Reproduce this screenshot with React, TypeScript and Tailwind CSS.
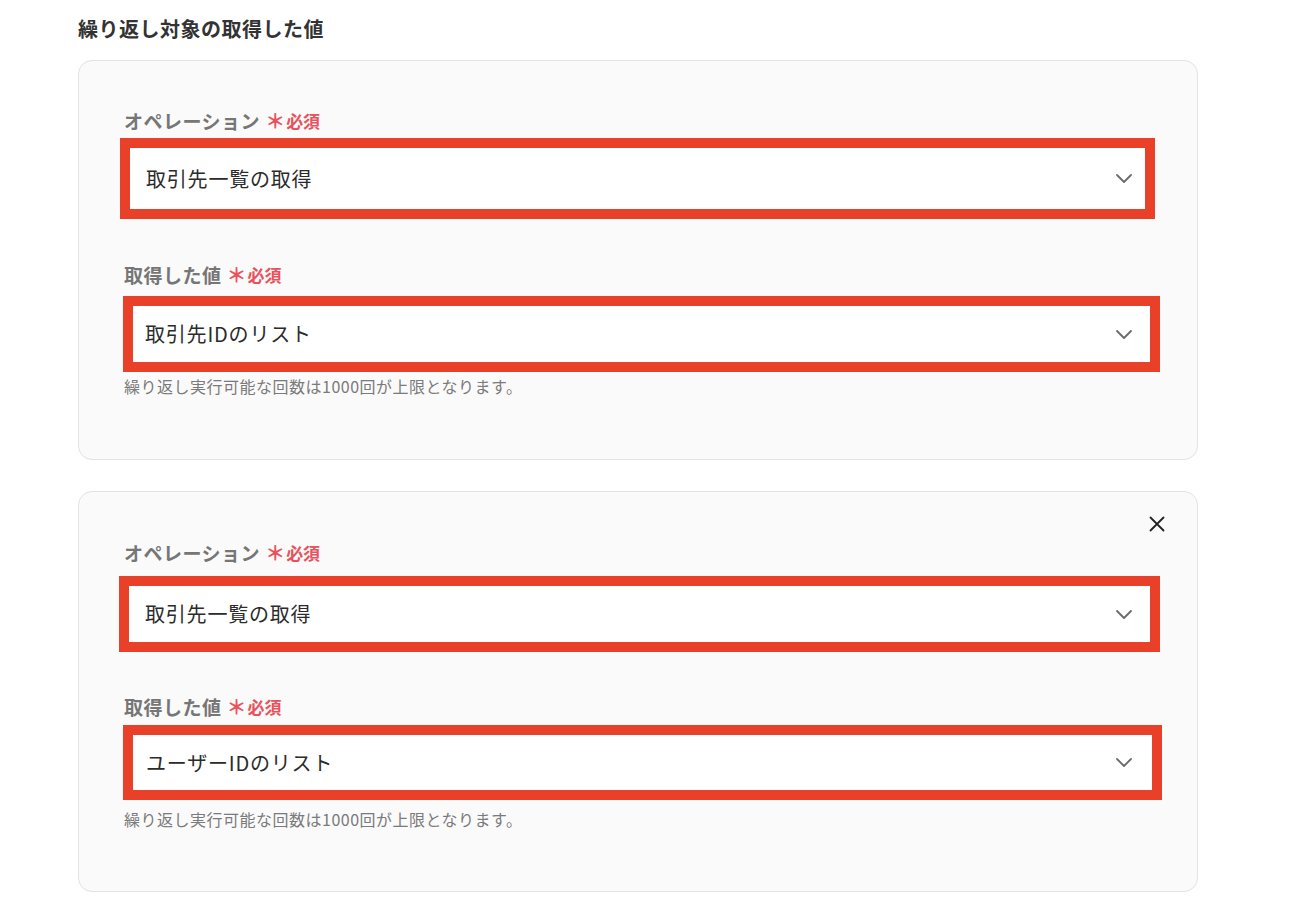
import React from "react";

const FONT = '"Noto Sans CJK JP", "Noto Sans", sans-serif';

function Chevron() {
  return (
    <svg width="16" height="9" viewBox="0 0 16 9" fill="none">
      <path d="M1 1 L8 8 L15 1" stroke="#6b6b6b" strokeWidth="1.8" strokeLinecap="round" strokeLinejoin="round" />
    </svg>
  );
}

function Label({ text }: { text: string }) {
  return (
    <div className="flex h-6 items-center">
      <span className="text-[19px] font-semibold leading-6 tracking-[0.5px] text-[#767676]">{text}</span>
      <span className="ml-[5px] text-[20px] font-semibold leading-6 text-[#e9515d]">＊</span>
      <span className="ml-[1px] text-[17px] font-semibold leading-6 text-[#e9515d]">必須</span>
    </div>
  );
}

function Select({ text, boxClass, innerClass }: { text: string; boxClass: string; innerClass: string }) {
  return (
    <div className={"box-border border-[10px] border-[#e94129] bg-white " + boxClass}>
      <div className={"flex h-full items-center justify-between " + innerClass}>
        <span className="text-[20px] leading-6 tracking-[0.8px] text-[#2b2b2b]">{text}</span>
        <Chevron />
      </div>
    </div>
  );
}

function Helper() {
  return (
    <div className="h-5 text-[16px] leading-5 tracking-[0.5px] text-[#7a7a7a]">
      繰り返し実行可能な回数は1000回が上限となります。
    </div>
  );
}

export default function App() {
  return (
    <div className="min-h-[901px] w-[1297px] bg-white" style={{ fontFamily: FONT }}>
      <div className="pl-[78px] pt-[15px]">
        <h2 className="h-7 text-[20px] font-semibold leading-7 tracking-[0.5px] text-[#333333]">
          繰り返し対象の取得した値
        </h2>

        <div className="mt-[17px] w-[1120px] rounded-[14px] border border-[#e3e3e3] bg-[#fafafa] pb-[63px] pl-[45px] pt-[48px]">
          <Label text="オペレーション" />
          <Select
            text="取引先一覧の取得"
            boxClass="mt-[5px] -ml-[4px] h-[81px] w-[1035px]"
            innerClass="pl-[16px] pr-[13px]"
          />
          <div className="mt-[44px]">
            <Label text="取得した値" />
          </div>
          <Select
            text="取引先IDのリスト"
            boxClass="mt-[9px] -ml-[1px] h-[76px] w-[1037px]"
            innerClass="pl-[12px] pr-[18px]"
          />
          <div className="mt-[4px]">
            <Helper />
          </div>
        </div>

        <div className="relative mt-[31px] w-[1120px] rounded-[14px] border border-[#e3e3e3] bg-[#fafafa] pb-[62px] pl-[45px] pt-[49px]">
          <button className="absolute right-[32px] top-[24px] flex h-4 w-4 items-center justify-center">
            <svg width="16" height="16" viewBox="0 0 16 16" fill="none">
              <path d="M1.5 1.5 L14.5 14.5 M14.5 1.5 L1.5 14.5" stroke="#222222" strokeWidth="1.8" strokeLinecap="round" />
            </svg>
          </button>
          <Label text="オペレーション" />
          <Select
            text="取引先一覧の取得"
            boxClass="mt-[11px] -ml-[5px] h-[76px] w-[1041px]"
            innerClass="pl-[16px] pr-[18px]"
          />
          <div className="mt-[43px]">
            <Label text="取得した値" />
          </div>
          <Select
            text="ユーザーIDのリスト"
            boxClass="mt-[6px] -ml-[1px] h-[75px] w-[1039px]"
            innerClass="pl-[13px] pr-[20px]"
          />
          <div className="mt-[9px]">
            <Helper />
          </div>
        </div>
      </div>
    </div>
  );
}
